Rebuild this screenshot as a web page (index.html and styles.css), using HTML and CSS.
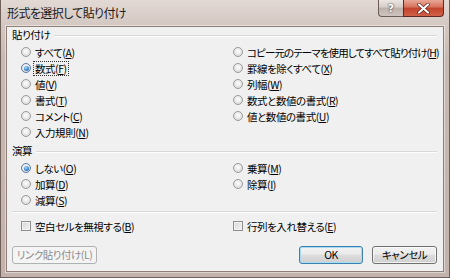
FILE: index.html
```html
<!DOCTYPE html>
<html lang="ja">
<head>
<meta charset="utf-8">
<title>形式を選択して貼り付け</title>
<link rel="stylesheet" href="styles.css">
</head>
<body>
<div class="window">
  <div class="titlebar">
    <span class="title">形式を選択して貼り付け</span>
    <div class="caption-btns">
      <span class="cbtn help">?</span>
      <span class="cbtn close"><svg width="13" height="11" viewBox="0 0 13 11"><path d="M2 1.5 L11 9.5 M11 1.5 L2 9.5" stroke="#5a1a10" stroke-width="3.4" stroke-linecap="round"/><path d="M2 1.5 L11 9.5 M11 1.5 L2 9.5" stroke="#ffffff" stroke-width="2.2" stroke-linecap="round"/></svg></span>
    </div>
  </div>
  <div class="client">
    <div class="group-head"><span class="glabel">貼り付け</span><span class="gline"></span></div>
    <div class="opts">
      <div class="col">
        <label class="opt"><span class="radio"></span><span class="txt">すべて(<u>A</u>)</span></label>
        <label class="opt"><span class="radio on"></span><span class="txt focus">数式(<u>F</u>)</span></label>
        <label class="opt"><span class="radio"></span><span class="txt">値(<u>V</u>)</span></label>
        <label class="opt"><span class="radio"></span><span class="txt">書式(<u>T</u>)</span></label>
        <label class="opt"><span class="radio"></span><span class="txt">コメント(<u>C</u>)</span></label>
        <label class="opt"><span class="radio"></span><span class="txt">入力規則(<u>N</u>)</span></label>
      </div>
      <div class="col">
        <label class="opt"><span class="radio"></span><span class="txt narrow">コピー元のテーマを使用してすべて貼り付け(<u>H</u>)</span></label>
        <label class="opt"><span class="radio"></span><span class="txt">罫線を除くすべて(<u>X</u>)</span></label>
        <label class="opt"><span class="radio"></span><span class="txt">列幅(<u>W</u>)</span></label>
        <label class="opt"><span class="radio"></span><span class="txt">数式と数値の書式(<u>R</u>)</span></label>
        <label class="opt"><span class="radio"></span><span class="txt">値と数値の書式(<u>U</u>)</span></label>
      </div>
    </div>
    <div class="group-head second"><span class="glabel">演算</span><span class="gline"></span></div>
    <div class="opts">
      <div class="col">
        <label class="opt"><span class="radio on"></span><span class="txt">しない(<u>O</u>)</span></label>
        <label class="opt"><span class="radio"></span><span class="txt">加算(<u>D</u>)</span></label>
        <label class="opt"><span class="radio"></span><span class="txt">減算(<u>S</u>)</span></label>
      </div>
      <div class="col">
        <label class="opt"><span class="radio"></span><span class="txt">乗算(<u>M</u>)</span></label>
        <label class="opt"><span class="radio"></span><span class="txt">除算(<u>I</u>)</span></label>
      </div>
    </div>
    <div class="sep"></div>
    <div class="opts checks">
      <label class="opt"><span class="check"></span><span class="txt">空白セルを無視する(<u>B</u>)</span></label>
      <label class="opt"><span class="check"></span><span class="txt">行列を入れ替える(<u>E</u>)</span></label>
    </div>
    <div class="buttons">
      <button class="btn disabled link" disabled>リンク貼り付け(L)</button>
      <div class="right-btns">
        <button class="btn default ok">OK</button>
        <button class="btn cancel">キャンセル</button>
      </div>
    </div>
  </div>
</div>
</body>
</html>
```

FILE: styles.css
```css
html, body {
  margin: 0;
  padding: 0;
  background: #c6b7b0;
}

body {
  font-family: "Noto Sans CJK JP", "Noto Sans", sans-serif;
  font-size: 10.5px;
  letter-spacing: -0.45px;
  font-feature-settings: "palt";
  color: #000;
}

.window {
  width: 450px;
  height: 278px;
  box-sizing: border-box;
  padding: 0 5px 5px 5px;
  border: 1px solid #6f605a;
  border-top: none;
  background: linear-gradient(#e2d9d5, #d3c7c1 26px, #c8b9b2 60px, #c2b2ab);
  display: flex;
  flex-direction: column;
}

.titlebar {
  height: 26px;
  display: flex;
  align-items: flex-start;
  padding-left: 1px;
}

.title {
  font-size: 12px;
  letter-spacing: -0.6px;
  line-height: 26px;
  color: #1a1a1a;
}

.caption-btns {
  margin-left: auto;
  display: flex;
}

.cbtn {
  height: 17px;
  box-sizing: border-box;
  display: flex;
  align-items: center;
  justify-content: center;
  border: 1px solid #6b5c57;
  border-top: none;
}

.help {
  width: 25px;
  border-radius: 0 0 0 4px;
  border-right: none;
  background: linear-gradient(#ebe5e2, #d6ccc8 45%, #bcb0ab 50%, #cfc4bf);
  color: #fff;
  font-family: "DejaVu Sans", sans-serif;
  font-weight: bold;
  font-size: 11px;
  letter-spacing: 0;
  text-shadow: 0 0 2px #4a3d38, 0 0 1px #4a3d38;
}

.close {
  width: 41px;
  border-radius: 0 0 4px 0;
  border-color: #5d2a22;
  background: linear-gradient(#e9a898, #d5705a 45%, #c2432b 50%, #cf6146);
}

.client {
  flex: 1;
  background: #f0f0f0;
  border: 1px solid #8e7e77;
  box-shadow: 0 0 0 1px rgba(255, 255, 255, 0.45);
  padding: 0 6px 0 5px;
  display: flex;
  flex-direction: column;
}

.group-head {
  height: 16px;
  display: flex;
  align-items: center;
  gap: 4px;
  margin-bottom: 1px;
}

.group-head.second {
  margin-top: 3px;
}

.glabel {
  line-height: 16px;
}

.gline {
  flex: 1;
  height: 1px;
  background: #d8d8d8;
  border-bottom: 1px solid #fdfdfd;
  margin-top: 2px;
}

.opts {
  display: grid;
  grid-template-columns: 212px 1fr;
  padding-left: 9px;
}

.col {
  display: flex;
  flex-direction: column;
}

.opt {
  height: 16px;
  display: flex;
  align-items: center;
  white-space: nowrap;
}

.txt {
  line-height: 13px;
  padding: 0 1px;
}

.txt.narrow {
  letter-spacing: -0.9px;
}

.txt u {
  text-underline-offset: 1px;
}

.focus {
  outline: 1px dotted #333;
  outline-offset: 0;
}

.radio {
  width: 10px;
  height: 10px;
  box-sizing: border-box;
  border-radius: 50%;
  border: 1px solid #9a9a9a;
  background: radial-gradient(circle at 50% 40%, #ffffff, #e6e6e6 55%, #cfcfcf);
  margin-right: 3px;
  display: flex;
  align-items: center;
  justify-content: center;
}

.radio.on {
  border-color: #5a7ea6;
}

.radio.on::after {
  content: "";
  width: 5px;
  height: 5px;
  border-radius: 50%;
  background: radial-gradient(circle at 40% 35%, #a8dcfa, #3a86d2 55%, #1d4f8c);
}

.sep {
  height: 1px;
  background: #d8d8d8;
  border-bottom: 1px solid #fdfdfd;
  margin: 3px 0 5px;
}

.check {
  width: 10px;
  height: 10px;
  box-sizing: border-box;
  border: 1px solid #8f8f8f;
  background: linear-gradient(135deg, #d6d6d6, #f4f4f4);
  box-shadow: inset 0 0 0 1px #f2f2f2;
  margin-right: 3px;
}

.buttons {
  margin-top: 12px;
  display: flex;
  justify-content: space-between;
}

.right-btns {
  display: flex;
  gap: 9px;
}

.btn {
  height: 18px;
  box-sizing: border-box;
  font-family: inherit;
  font-size: 10.5px;
  letter-spacing: -0.45px;
  font-feature-settings: "palt";
  white-space: nowrap;
  padding: 0;
  border: 1px solid #707070;
  border-radius: 3px;
  background: linear-gradient(#f2f2f2, #ebebeb 45%, #dddddd 50%, #cfcfcf);
  box-shadow: inset 0 0 0 1px rgba(255, 255, 255, 0.7);
  color: #000;
  line-height: 14px;
}

.link {
  width: 85px;
}

.disabled {
  border-color: #adb2b5;
  background: #f4f4f4;
  color: #8d8d8d;
  box-shadow: none;
}

.ok {
  width: 64px;
  border-color: #3c7fb1;
  box-shadow: inset 0 0 0 1px #a8dcf3;
}

.cancel {
  width: 65px;
}
```
